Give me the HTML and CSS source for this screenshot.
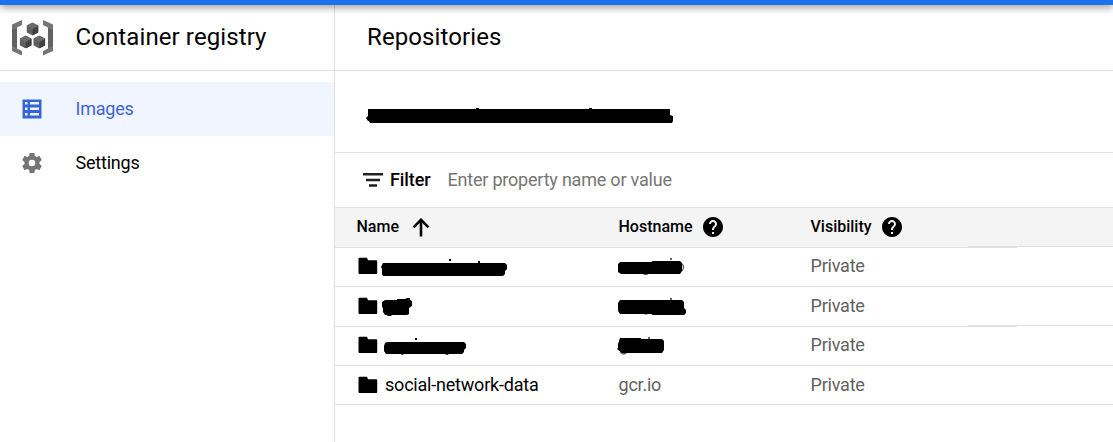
FILE: index.html
```html
<!DOCTYPE html>
<html lang="en">
<head>
<meta charset="utf-8">
<title>Container registry</title>
<link rel="stylesheet" href="styles.css">
</head>
<body>
<svg width="0" height="0" class="defs">
  <symbol id="folder" viewBox="0 0 20 18"><path d="M1.500 .800h7.500l1 2.400h8.200a1 1 0 0 1 1 1V16a1 1 0 0 1-1 1H1.500a1 1 0 0 1-1-1V1.800a1 1 0 0 1 1-1z"/></symbol>
  <symbol id="help" viewBox="2 2 20 20"><path d="M12 2C6.480 2 2 6.480 2 12s4.480 10 10 10 10-4.480 10-10S17.520 2 12 2zm1 17h-2v-2h2v2zm2.070-7.750l-.9.920C13.450 12.900 13 13.500 13 15h-2v-.5c0-1.100.45-2.100 1.170-2.830l1.240-1.260c.37-.36.590-.86.590-1.410 0-1.100-.9-2-2-2s-2 .9-2 2H8c0-2.210 1.790-4 4-4s4 1.790 4 4c0 .88-.36 1.680-.93 2.250z"/></symbol>
  <symbol id="cube" viewBox="0 0 12 13"><path fill="#5f5f5f" d="M6 0 12 3.300V9.700L6 13 0 9.700V3.300z"/><path fill="#6b6b6b" d="M6 0 12 3.300 6 6.500 0 3.300z"/><path fill="#424242" d="M12 3.300 6 6.500V13l6-3.300z"/></symbol>
</svg>
<div class="topbar"></div>
<div class="layout">
  <aside class="sidebar">
    <div class="brand">
      <svg class="logo" width="41" height="36" viewBox="0 0 41 36">
        <path fill="#757575" d="M10 0v5L5 7.500v21l5 2.500v4.500L0 31V4.500zM31 0v5l5 2.500v21L31 31v4.500L41 31V4.500z"/>
        <path fill="#616161" d="M0 10l5-2v20l-5-2zM41 10l-5-2v20l5-2z"/>
        <use href="#cube" x="14.500" y="2.500" width="12" height="13"/>
        <use href="#cube" x="7.700" y="15.500" width="12" height="13"/>
        <use href="#cube" x="21.300" y="15.500" width="12" height="13"/>
      </svg>
      <span class="brand-name">Container registry</span>
    </div>
    <nav class="nav">
      <a class="nav-item active">
        <svg width="20" height="20" viewBox="0 0 20 20"><path fill="#3367d6" fill-rule="evenodd" d="M.5.500h19v19H.500zM3 3v2.500h2.500V3zm5 0v2.500h9V3zM3 8.500V11h2.500V8.500zm5 0V11h9V8.500zM3 14v2.500h2.500V14zm5 0v2.500h9V14z"/></svg>
        <span>Images</span>
      </a>
      <a class="nav-item">
        <svg width="20" height="20" viewBox="2 2 20 20"><path fill="#757575" d="M19.430 12.980c.04-.32.070-.64.070-.98s-.03-.66-.07-.98l2.110-1.650c.19-.15.240-.42.120-.64l-2-3.460c-.12-.22-.39-.3-.61-.22l-2.490 1c-.52-.4-1.080-.73-1.690-.98l-.38-2.650C14.460 2.180 14.250 2 14 2h-4c-.25 0-.46.180-.49.420l-.38 2.650c-.61.250-1.170.590-1.690.98l-2.490-1c-.23-.09-.49 0-.61.220l-2 3.460c-.13.220-.07.490.12.640l2.110 1.650c-.04.320-.07.650-.07.980s.03.660.07.980l-2.110 1.650c-.19.150-.24.420-.12.640l2 3.460c.12.220.39.300.61.220l2.490-1c.52.400 1.080.730 1.690.98l.38 2.650c.03.240.24.420.49.420h4c.25 0 .46-.18.490-.42l.38-2.650c.61-.25 1.170-.59 1.690-.98l2.490 1c.23.090.49 0 .61-.22l2-3.460c.12-.22.070-.49-.12-.64l-2.110-1.650zM12 15.300a3.300 3.300 0 1 1 0-6.600 3.300 3.300 0 0 1 0 6.600z"/></svg>
        <span>Settings</span>
      </a>
    </nav>
  </aside>
  <main class="main">
    <header class="page-header"><h1>Repositories</h1></header>
    <section class="project">
      <svg width="310" height="18" viewBox="0 0 310 18"><path d="M2 3h302v6l3 1v5l-1 2H4l-1-2H2l-2-3 2-2zM110 2h3v2h-3zM223 2h3v2h-3z"/></svg>
    </section>
    <div class="filter">
      <svg width="20" height="14" viewBox="0 0 20 14"><path fill="#212121" d="M0 0h20v2.500H0zM3 5.700h14v2.500H3zM6 11.300h8v2.500H6z"/></svg>
      <span class="filter-label">Filter</span>
      <span class="filter-hint">Enter property name or value</span>
    </div>
    <div class="table">
      <div class="row head stepped">
        <div class="cell"><span class="th name">Name</span><svg class="sort" width="18" height="19" viewBox="0 0 18 19"><path fill="none" stroke="#000" stroke-width="2.600" d="M9 18.500V2M1.500 9.300 9 1.800l7.500 7.500"/></svg></div>
        <div class="cell"><span class="th host">Hostname</span><svg class="help" width="20" height="20"><use href="#help"/></svg></div>
        <div class="cell"><span class="th vis">Visibility</span><svg class="help" width="20" height="20"><use href="#help"/></svg></div>
      </div>
      <div class="row raised">
        <div class="cell item"><svg class="folder" width="20" height="18"><use href="#folder"/></svg><svg class="mark" width="130" height="24" viewBox="0 0 130 24"><path d="M3 9h122l2 2v4l-2 2v3l-2 2H3l-1-2v-5l-1-2 1-2zM69 5h2v2h-2zM98 7h2v3h-2z"/></svg></div>
        <div class="cell"><svg class="mark host-mark" width="72" height="24" viewBox="0 0 72 24"><path fill="none" stroke="#666" stroke-width="1.300" d="M25 18.500q4 4 7 0M65 10q3 3 0 7"/><path fill="#666" d="M53 4h2v2h-2z"/><path d="M1 10l2-2h32V7h28l2 2v8l-2 3H4l-3-2z"/></svg></div>
        <div class="cell muted">Private</div>
      </div>
      <div class="row tall stepped raised">
        <div class="cell item"><svg class="folder" width="20" height="18"><use href="#folder"/></svg><svg class="mark" width="130" height="24" viewBox="0 0 130 24"><path d="M2 9l3-2h12V6h8l2-1h3v2l2 1v5l-3 2v6l-2 1h-15l-1 1H8l-1-1H5l-2-3v-3l-1-3z"/></svg></div>
        <div class="cell"><svg class="mark host-mark" width="72" height="24" viewBox="0 0 72 24"><path fill="none" stroke="#666" stroke-width="1.300" d="M25 19q4 4 7 0"/><path fill="#666" d="M53 5h2v2h-2z"/><path d="M1 10l2-3h62l2 2v6l2 2v3l-2 2H35v-1H3l-2-3z"/></svg></div>
        <div class="cell muted">Private</div>
      </div>
      <div class="row raised">
        <div class="cell item"><svg class="folder" width="20" height="18"><use href="#folder"/></svg><svg class="mark" width="130" height="24" viewBox="0 0 130 24"><path d="M5 10l2-1h77l2 2v4l-2 2v2l-2 2H69l-2 1-2-1H24l-2 1-1-1H6l-2-3v-5zM35 5h2v2h-2z"/></svg></div>
        <div class="cell"><svg class="mark host-mark" width="72" height="24" viewBox="0 0 72 24"><path fill="none" stroke="#666" stroke-width="1.300" d="M3 19q4 4 7 0"/><path fill="#666" d="M31 4h2v2h-2z"/><path d="M1 11l2-6h21v1h21l2 2v9l-2 3H5l-5-4 1-1z"/></svg></div>
        <div class="cell muted">Private</div>
      </div>
      <div class="row">
        <div class="cell item"><svg class="folder" width="20" height="18"><use href="#folder"/></svg><span class="repo">social-network-data</span></div>
        <div class="cell muted gcr">gcr.io</div>
        <div class="cell muted">Private</div>
      </div>
    </div>
  </main>
</div>
</body>
</html>
```
FILE: styles.css
```css
* { box-sizing: border-box; }
body { margin: 0; height: 442px; overflow: hidden; background: #fff; color: #000; font: 18px/24px Roboto, sans-serif; letter-spacing: -.21px; }
svg { display: block; flex: none; }
.defs { position: absolute; }
.topbar { position: relative; height: 5px; background: #1a73e8; box-shadow: 0 1px 8px rgba(0, 0, 0, .65); }
.layout { display: flex; height: 437px; }
.sidebar { width: 335px; flex: none; border-right: 1px solid #e0e0e0; }
.brand { display: flex; align-items: center; height: 66px; padding: 0 0 1px 12px; border-bottom: 1px solid #e0e0e0; }
.logo { margin-top: 2px; }
.brand-name { margin-left: 22.500px; font-size: 24px; letter-spacing: .1px; }
.nav { padding-top: 11px; }
.nav-item { display: flex; align-items: center; height: 54px; padding-left: 22px; gap: 33.500px; }
.nav-item.active { background: #f0f5ff; color: #3e66d4; }
.main { flex: 1; min-width: 0; }
.page-header { display: flex; align-items: center; height: 66px; padding: 0 0 1px 32px; border-bottom: 1px solid #e0e0e0; }
h1 { margin: 0; font-size: 24px; font-weight: 400; letter-spacing: .1px; }
.project { height: 82px; padding: 35px 0 0 31px; border-bottom: 1px solid #e0e0e0; }
.filter { display: flex; align-items: center; height: 55px; padding-left: 27.500px; border-bottom: 1px solid #e0e0e0; }
.filter-label { margin-left: 7.500px; font-weight: 500; letter-spacing: -.1px; }
.filter-hint { margin-left: 17px; color: #757575; }
.row { position: relative; display: grid; grid-template-columns: 262px 192px 1fr; height: 39px; padding-left: 21.500px; border-bottom: 1px solid #e0e0e0; }
.row.tall { height: 40px; }
.row.head { height: 40px; padding-bottom: 2px; background: #f4f4f4; font-size: 16px; font-weight: 500; letter-spacing: 0; }
.row.raised { padding-bottom: 2px; }
/* the divider sits one pixel higher in the last section of these rows */
.stepped::before, .stepped::after { content: ""; position: absolute; height: 1px; }
.stepped::before { left: 633px; right: 0; bottom: 0; background: #e0e0e0; }
.stepped::after { left: 682px; right: 0; bottom: -1px; background: #fff; }
.cell { display: flex; align-items: center; }
.muted { color: #616161; }
.sort { margin-left: 13px; margin-top: 2px; }
.help { margin-left: 10.500px; margin-top: 1px; }
.folder { margin-left: 1.500px; }
.item .mark { margin-left: 2px; margin-top: -1px; }
.host-mark { margin-left: -1.500px; margin-top: -1px; }
.repo { margin-left: 7px; }
```
